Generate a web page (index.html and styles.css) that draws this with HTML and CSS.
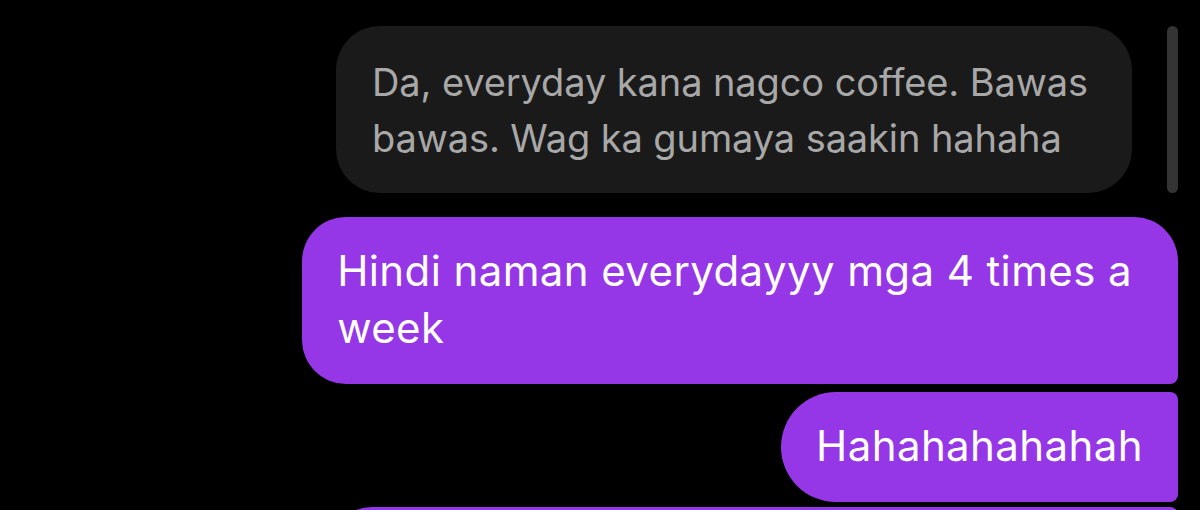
FILE: index.html
```html
<!DOCTYPE html>
<html>
<head>
<meta charset="utf-8" />
<meta name="viewport" content="width=device-width,initial-scale=1.0" />
<title>Chat</title>
<link rel="stylesheet" href="styles.css">
</head>
<body>
	<div class="thread">
		<div class="reply">
			<div class="bubble quoted">Da, everyday kana nagco coffee. Bawas<br>bawas. Wag ka gumaya saakin hahaha</div>
			<div class="reply-bar"></div>
		</div>
		<div class="bubble mine first">Hindi naman everydayyy mga 4 times a<br>week</div>
		<div class="bubble mine middle">Hahahahahahah</div>
		<div class="bubble mine next"></div>
	</div>
</body>
</html>
```

FILE: styles.css
```css
*{margin: 0;padding: 0;box-sizing: border-box;}
html,body {height: 100%;overflow: hidden;}
body{background-color: #000;font-family: Inter, "Noto Sans", sans-serif;}

.thread {display: flex;flex-direction: column;align-items: flex-end;padding: 26px 22px 0 0;}
.reply {display: flex;gap: 35px;}
.reply-bar {width: 11px;border-radius: 6px;background-color: #343434;}

.bubble {white-space: nowrap;}
.quoted {padding: 28px 44px 27px 36px;font-size: 38px;line-height: 56px;letter-spacing: -0.1px;background-color: #1a1a1a;color: #a8a8a8;border-radius: 44px;}
.mine {padding: 25px 35px 28px;font-size: 42px;line-height: 57px;letter-spacing: 0.4px;background-color: #9537e6;color: #fff;}
.first {margin-top: 24px;padding-right: 46px;border-radius: 44px 44px 8px 44px;}
.middle {margin-top: 8px;border-radius: 56px 8px 8px 56px;}
.next {margin-top: 5px;width: 850px;height: 110px;border-radius: 44px 8px 8px 44px;}
```
